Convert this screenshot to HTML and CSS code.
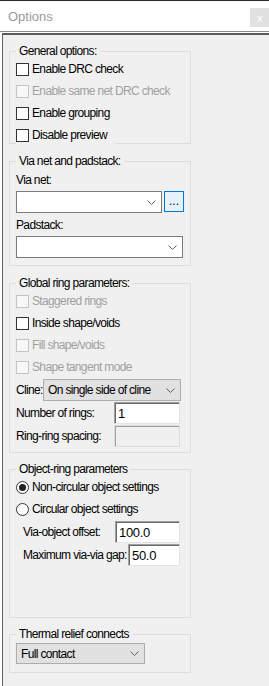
FILE: index.html
```html
<!DOCTYPE html>
<html lang="en">
<head>
    <meta charset="UTF-8">
    <meta name="viewport" content="width=device-width, initial-scale=1.0">
    <title>Options</title>
    <link rel="stylesheet" href="styles.css">
</head>
<body>
    <div class="titlebar">
        <span class="title">Options</span>
        <span class="close">x</span>
    </div>

    <div class="frame">
        <fieldset class="group">
            <legend>General options:</legend>
            <div class="row"><span class="check"></span>Enable DRC check</div>
            <div class="row disabled"><span class="check"></span>Enable same net DRC check</div>
            <div class="row"><span class="check"></span>Enable grouping</div>
            <div class="row cover"><span class="check"></span>Disable preview</div>
        </fieldset>

        <fieldset class="group group-via">
            <legend>Via net and padstack:</legend>
            <div class="label">Via net:</div>
            <div class="combo-row">
                <div class="combo via-net">
                    <span></span>
                    <svg class="chevron" width="9" height="5" viewBox="0 0 9 5"><polyline points="0.5,0.5 4.5,4.5 8.5,0.5" /></svg>
                </div>
                <span class="browse">...</span>
            </div>
            <div class="label">Padstack:</div>
            <div class="combo-row">
                <div class="combo padstack">
                    <span></span>
                    <svg class="chevron" width="9" height="5" viewBox="0 0 9 5"><polyline points="0.5,0.5 4.5,4.5 8.5,0.5" /></svg>
                </div>
            </div>
        </fieldset>

        <fieldset class="group group-ring">
            <legend>Global ring parameters:</legend>
            <div class="row disabled"><span class="check"></span>Staggered rings</div>
            <div class="row"><span class="check"></span>Inside shape/voids</div>
            <div class="row disabled"><span class="check"></span>Fill shape/voids</div>
            <div class="row disabled"><span class="check"></span>Shape tangent mode</div>
            <div class="field-row cline-row">
                <span class="cline-label">Cline:</span>
                <div class="combo list cline">
                    <span>On single side of cline</span>
                    <svg class="chevron" width="9" height="5" viewBox="0 0 9 5"><polyline points="0.5,0.5 4.5,4.5 8.5,0.5" /></svg>
                </div>
            </div>
            <div class="field-row">
                <span class="field-label">Number of rings:</span>
                <span class="textbox">1</span>
            </div>
            <div class="field-row">
                <span class="field-label">Ring-ring spacing:</span>
                <span class="textbox off"></span>
            </div>
        </fieldset>

        <fieldset class="group group-object">
            <legend>Object-ring parameters</legend>
            <div class="row"><span class="radio on"></span>Non-circular object settings</div>
            <div class="row"><span class="radio"></span>Circular object settings</div>
            <div class="field-row sub">
                <span class="field-label offset-label">Via-object offset:</span>
                <span class="textbox">100.0</span>
            </div>
            <div class="field-row sub">
                <span class="field-label gap-label">Maximum via-via gap:</span>
                <span class="textbox short">50.0</span>
            </div>
        </fieldset>

        <fieldset class="group group-thermal">
            <legend>Thermal relief connects</legend>
            <div class="combo list thermal">
                <span>Full contact</span>
                <svg class="chevron" width="9" height="5" viewBox="0 0 9 5"><polyline points="0.5,0.5 4.5,4.5 8.5,0.5" /></svg>
            </div>
        </fieldset>
    </div>
</body>
</html>
```

FILE: styles.css
```css
* {
    box-sizing: border-box;
}

body {
    margin: 0;
    background: #fff;
    font-family: "Liberation Sans", Arial, sans-serif;
    font-size: 12px;
    letter-spacing: -0.65px;
    white-space: nowrap;
    color: #000;
}

.titlebar {
    display: flex;
    justify-content: space-between;
    align-items: center;
    height: 32px;
    padding-left: 8px;
    border-top: 1px solid #2b2b2b;
    border-bottom: 1px solid #8c8c8c;
    background: #fff;
}

.title {
    color: #9a9a9a;
    font-size: 13px;
    letter-spacing: 0;
}

.close {
    align-self: flex-start;
    display: flex;
    justify-content: center;
    align-items: center;
    width: 19px;
    height: 19px;
    margin-top: 7px;
    background: #e1e1e1;
    color: #fff;
    font-size: 11px;
}

.frame {
    height: 653px;
    margin: 1px 0 0 2px;
    padding: 9px 0 0 6px;
    border-top: 2px solid #5a5a5a;
    border-left: 1px solid #646464;
    background: #f0f0f0;
}

.group {
    width: 182px;
    min-width: 0;
    margin: 10px 0 0;
    padding: 0 6px;
    border: 1px solid #dcdcdc;
}

.group:first-child {
    margin-top: 0;
}

.group legend {
    height: 14px;
    padding: 0 3px;
    line-height: 14px;
}

/* check boxes and radio buttons */
.row {
    display: flex;
    align-items: center;
    height: 22px;
}

.row.disabled {
    color: #a0a0a0;
}

.row.cover {
    width: 99px;
    margin-bottom: -3px;
    background: #f0f0f0;
}

.check {
    flex: none;
    width: 13px;
    height: 13px;
    margin-right: 3px;
    border: 1px solid #333;
    background: #fff;
}

.row.disabled .check {
    border-color: #c4c4c4;
    background: #f7f7f7;
}

.radio {
    flex: none;
    display: flex;
    justify-content: center;
    align-items: center;
    width: 13px;
    height: 13px;
    margin-right: 3px;
    border: 1px solid #333;
    border-radius: 50%;
    background: #fff;
}

.radio.on::after {
    content: "";
    width: 7px;
    height: 7px;
    border-radius: 50%;
    background: #222;
}

/* combo boxes */
.label {
    height: 14px;
    margin-top: 5px;
    line-height: 14px;
}

.combo-row {
    display: flex;
    gap: 2px;
    margin-top: 4px;
}

.combo {
    display: flex;
    justify-content: space-between;
    align-items: center;
    height: 22px;
    padding: 0 5px 0 4px;
    border: 1px solid #7a7a7a;
    background: #fff;
}

.combo.list {
    border-color: #adadad;
    background: #e1e1e1;
}

.chevron {
    flex: none;
    fill: none;
    stroke: #606060;
    stroke-width: 1;
}

.via-net {
    width: 146px;
}

.padstack {
    width: 167px;
}

.browse {
    display: flex;
    justify-content: center;
    align-items: flex-end;
    width: 20px;
    height: 21px;
    padding-bottom: 4px;
    border: 1px solid #0078d7;
    background: #e5f1fb;
    letter-spacing: 0;
    line-height: 1;
}

.group-via {
    padding-bottom: 7px;
}

/* text fields */
.field-row {
    display: flex;
    align-items: center;
    height: 22px;
    margin-top: 1px;
}

.cline-label {
    flex: none;
    width: 27px;
}

.cline {
    width: 138px;
}

.field-label {
    flex: none;
    width: 98px;
}

.textbox {
    flex: none;
    display: flex;
    align-items: center;
    width: 66px;
    height: 22px;
    padding-left: 3px;
    border: 1px solid;
    border-color: #a0a0a0 #e3e3e3 #e3e3e3 #a0a0a0;
    background: #fff;
    box-shadow: inset 1px 1px 0 #696969;
    font-size: 13px;
    letter-spacing: -0.3px;
}

.textbox.off {
    border-color: #dcdcdc;
    background: #f0f0f0;
    box-shadow: inset 1px 1px 0 #a0a0a0;
}

.textbox.short {
    width: 52px;
}

.group-ring {
    padding-bottom: 5px;
}

.sub {
    padding-left: 7px;
}

.offset-label {
    width: 92px;
}

.gap-label {
    width: 105px;
}

.sub .textbox {
    width: 65px;
}

.sub .textbox.short {
    width: 52px;
}

.group-object {
    margin-top: 9px;
    padding-bottom: 51px;
}

.thermal {
    width: 129px;
    height: 21px;
    margin-top: 2px;
}

.group-thermal {
    margin-top: 9px;
    padding-bottom: 8px;
}
```
